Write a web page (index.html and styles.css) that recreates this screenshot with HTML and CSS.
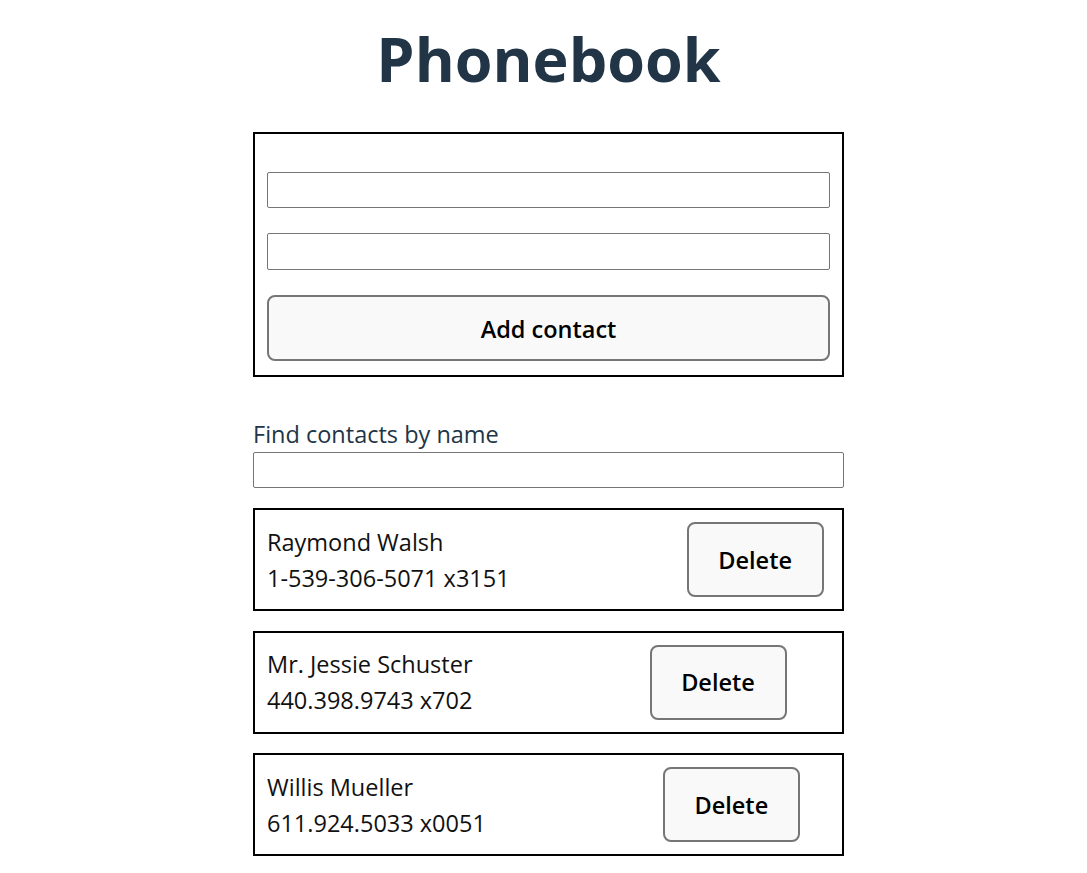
FILE: index.html
```html
<!DOCTYPE html>
<html lang="en">
<head>
<meta charset="UTF-8">
<title>Phonebook</title>
<link rel="stylesheet" href="styles.css">
</head>
<body>
<div class="app">
  <h1 class="title">Phonebook</h1>
  <form class="contact-form">
    <input class="field" type="text" name="name">
    <input class="field field-number" type="tel" name="number">
    <button class="btn btn-add" type="button">Add contact</button>
  </form>
  <label class="filter">
    <span class="filter-label">Find contacts by name</span>
    <input class="field field-filter" type="text" name="filter">
  </label>
  <ul class="contacts">
    <li class="contact">
      <div class="contact-info">
        <p class="contact-name">Raymond Walsh</p>
        <p class="contact-number">1-539-306-5071 x3151</p>
      </div>
      <button class="btn btn-delete" type="button">Delete</button>
    </li>
    <li class="contact">
      <div class="contact-info">
        <p class="contact-name">Mr. Jessie Schuster</p>
        <p class="contact-number">440.398.9743 x702</p>
      </div>
      <button class="btn btn-delete" type="button">Delete</button>
    </li>
    <li class="contact">
      <div class="contact-info">
        <p class="contact-name">Willis Mueller</p>
        <p class="contact-number">611.924.5033 x0051</p>
      </div>
      <button class="btn btn-delete" type="button">Delete</button>
    </li>
  </ul>
</div>
</body>
</html>
```
FILE: styles.css
```css
* { box-sizing: border-box; }
html, body { margin: 0; padding: 0; background: #fff; }
body {
  font-family: "Open Sans", "Noto Sans", sans-serif;
  font-size: 23.5px;
  line-height: 36px;
  color: #213547;
  padding-left: 10px;
}
.app {
  width: 591px;
  margin: 0 auto;
  display: flex;
  flex-direction: column;
}
.title {
  margin: 17px 0 0;
  height: 115px;
  font-size: 61px;
  line-height: 84px;
  font-weight: 700;
  text-align: center;
  color: #213547;
}
.contact-form {
  border: 2px solid #000;
  padding: 38px 12px 14px;
  display: flex;
  flex-direction: column;
  gap: 25px;
}
.field {
  display: block;
  width: 100%;
  height: 36px;
  border: 1px solid #767676;
  border-radius: 2px;
  background: #fff;
  font: inherit;
  padding: 0 4px;
}
.field-number { height: 37px; }
.btn {
  font-family: "Open Sans", "Noto Sans", sans-serif;
  font-weight: 600;
  font-size: 23.5px;
  color: #000;
  background: #f9f9f9;
  border: 2px solid #767676;
  border-radius: 8px;
}
.btn-add { height: 66px; padding-top: 3px; }
.filter {
  margin-top: 44px;
  display: flex;
  flex-direction: column;
}
.filter-label {
  display: block;
  line-height: 27px;
  height: 31px;
}
.field-filter { height: 36px; }
.contacts {
  list-style: none;
  margin: 20px 0 0;
  padding: 0;
  display: flex;
  flex-direction: column;
  gap: 19.5px;
}
.contact {
  border: 2px solid #000;
  padding: 12px;
  display: flex;
  align-items: center;
  gap: 177px;
  color: #111;
}
.contact-info { display: flex; flex-direction: column; }
.contact-name, .contact-number { margin: 0; line-height: 36px; }
.btn-delete {
  width: 137px;
  height: 75px;
  flex: none;
}
```
